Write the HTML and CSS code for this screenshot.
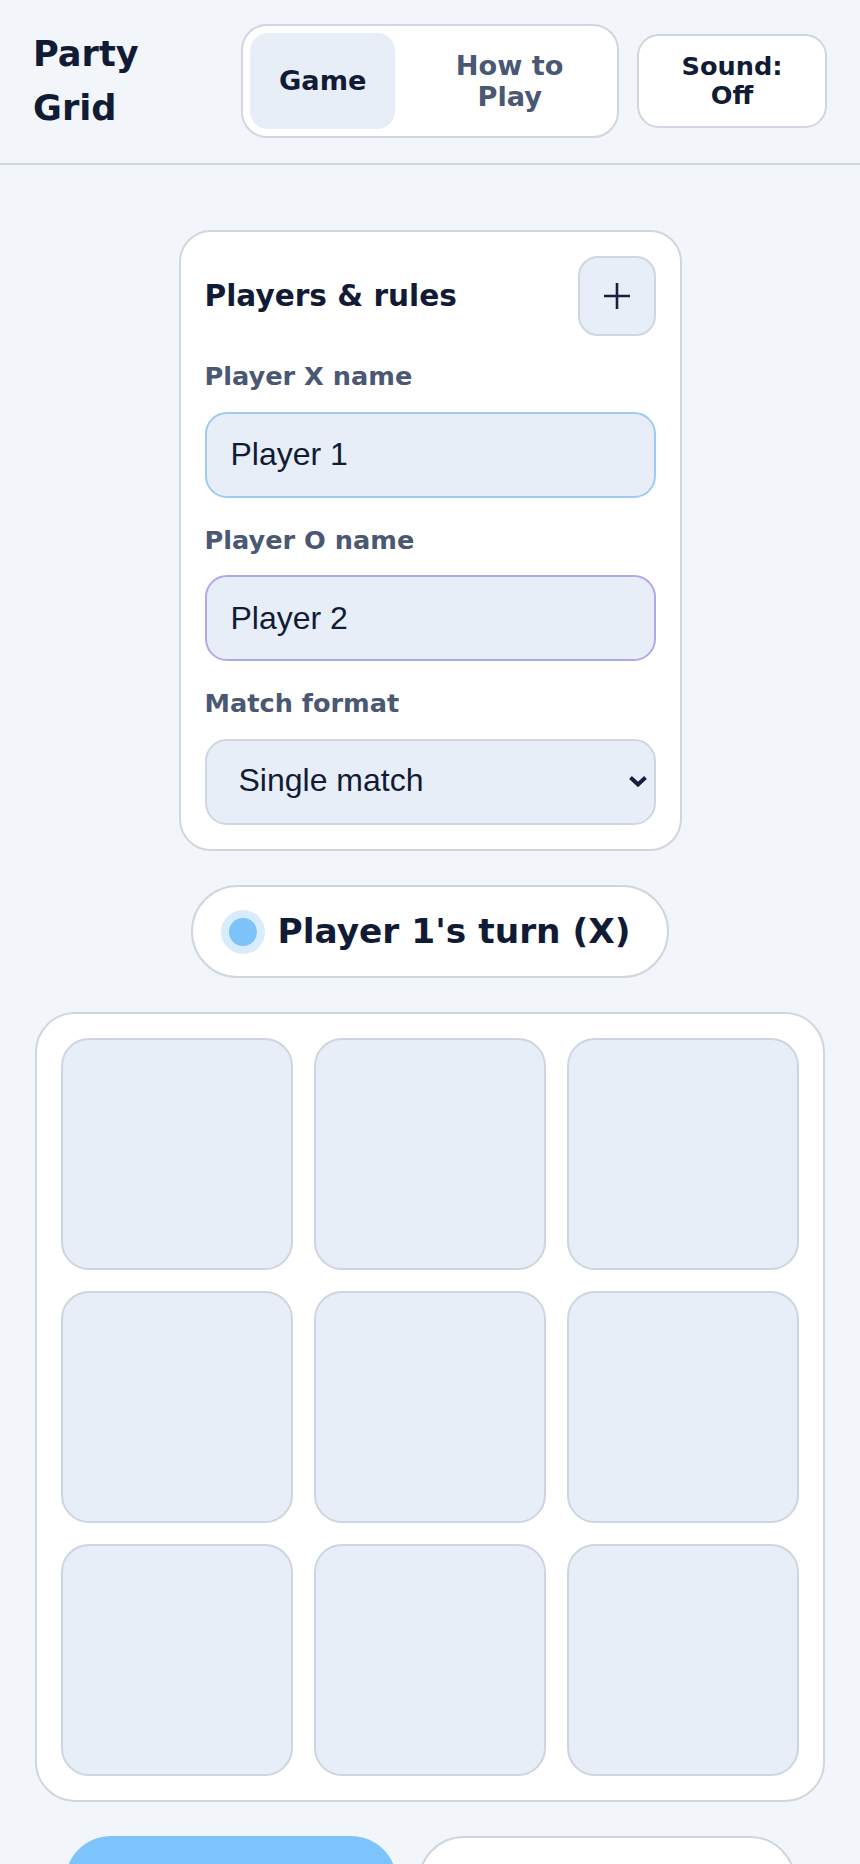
FILE: index.html
```html
<!doctype html>
<html lang="en">
    <head>
        <meta charset="UTF-8" />
        <meta name="viewport" content="width=device-width, initial-scale=1.0" />
        <title>Party Grid</title>
        <link rel="stylesheet" href="styles.css">
    </head>
    <body>
        <header class="topbar">
            <h1 class="brand">Party Grid</h1>
            <nav class="tabs">
                <button class="tab tab-active">Game</button>
                <button class="tab tab-wide">How to Play</button>
            </nav>
            <button class="sound-btn">Sound: Off</button>
        </header>

        <main class="page">
            <section class="card">
                <div class="card-head">
                    <h2>Players &amp; rules</h2>
                    <button class="icon-btn" aria-label="Add">
                        <svg width="28" height="28" viewBox="0 0 28 28">
                            <path d="M14 1V27M1 14H27" stroke="#16203a" stroke-width="2.6" fill="none" />
                        </svg>
                    </button>
                </div>

                <div class="field">
                    <label for="player-x">Player X name</label>
                    <input type="text" id="player-x" class="text-input input-x" value="Player 1" />
                </div>

                <div class="field">
                    <label for="player-o">Player O name</label>
                    <input type="text" id="player-o" class="text-input input-o" value="Player 2" />
                </div>

                <div class="field">
                    <label for="format">Match format</label>
                    <div class="select-wrap">
                        <select id="format" class="text-input select">
                            <option>Single match</option>
                            <option>Best of 3</option>
                            <option>Best of 5</option>
                        </select>
                        <svg class="chevron" width="20" height="12" viewBox="0 0 20 12">
                            <path d="M2.5 2.5L10 9.5L17.5 2.5" stroke="#16203a" stroke-width="4" fill="none" />
                        </svg>
                    </div>
                </div>
            </section>

            <div class="turn">
                <span class="turn-dot"></span>
                <span class="turn-text">Player 1's turn (X)</span>
            </div>

            <div class="board">
                <button class="cell"></button>
                <button class="cell"></button>
                <button class="cell"></button>
                <button class="cell"></button>
                <button class="cell"></button>
                <button class="cell"></button>
                <button class="cell"></button>
                <button class="cell"></button>
                <button class="cell"></button>
            </div>

            <div class="actions">
                <button class="btn btn-primary">New round</button>
                <button class="btn btn-secondary">Reset scores</button>
            </div>
        </main>
    </body>
</html>
```

FILE: styles.css
```css
body {
    font-family: "DejaVu Sans", Verdana, sans-serif;
    background-color: #f2f6fb;
    color: #111b35;
    margin: 0;
    padding: 0;
}
button {
    font-family: inherit;
    cursor: pointer;
}
.topbar {
    display: flex;
    align-items: center;
    gap: 18px;
    padding: 24px 33px 25px;
    border-bottom: 2px solid #cfd6e1;
}
.brand {
    flex: 1;
    min-width: 0;
    margin: 0;
    font-size: 35.2px;
    line-height: 54px;
    font-weight: 700;
    color: #111b35;
}
.tabs {
    display: flex;
    gap: 14px;
    width: 378px;
    box-sizing: border-box;
    padding: 7px;
    background: #fff;
    border: 2px solid #cfd6e1;
    border-radius: 26px;
}
.tab {
    height: 96px;
    padding: 0 29px;
    border: none;
    border-radius: 18px;
    background: transparent;
    font-size: 27.2px;
    line-height: 1.15;
    font-weight: 700;
    color: #4a5873;
}
.tab-active {
    background: #e8eef7;
    color: #111b35;
}
.tab-wide {
    flex: 1;
    padding: 0 16px;
}
.sound-btn {
    width: 190px;
    height: 94px;
    padding: 0 30px;
    background: #fff;
    border: 2px solid #cfd6e1;
    border-radius: 22px;
    font-size: 25.6px;
    line-height: 1.15;
    font-weight: 700;
    color: #111b35;
}
.page {
    display: flex;
    flex-direction: column;
    align-items: center;
    gap: 34px;
    padding: 65px 0 40px;
}
.card {
    width: 503px;
    box-sizing: border-box;
    padding: 24px;
    background: #fff;
    border: 2px solid #cfd6e1;
    border-radius: 32px;
}
.card-head {
    display: flex;
    align-items: center;
    justify-content: space-between;
    margin-bottom: 25px;
}
.card-head h2 {
    margin: 0;
    font-size: 29.6px;
    font-weight: 700;
    color: #111b35;
}
.icon-btn {
    display: flex;
    align-items: center;
    justify-content: center;
    width: 78px;
    height: 80px;
    padding: 0;
    background: #e8eef7;
    border: 2px solid #cfd6e1;
    border-radius: 20px;
}
.field {
    margin-bottom: 27px;
}
.field:last-child {
    margin-bottom: 0;
}
.field label {
    display: block;
    margin-bottom: 20px;
    font-size: 25.6px;
    line-height: 1.2;
    font-weight: 700;
    color: #4a5873;
}
.text-input {
    display: block;
    width: 100%;
    height: 86px;
    box-sizing: border-box;
    padding: 0 24px;
    background: #e8eef7;
    border: 2px solid #cfd6e1;
    border-radius: 22px;
    font-family: "Liberation Sans", Arial, sans-serif;
    font-size: 32px;
    color: #111b35;
    outline: none;
}
.input-x {
    border-color: #9fcbf0;
}
.input-o {
    border-color: #b2a7ea;
}
.select-wrap {
    position: relative;
}
.select {
    appearance: none;
    -webkit-appearance: none;
    padding: 0 24px 4px 32px;
}
.chevron {
    position: absolute;
    right: 8px;
    top: 36px;
    pointer-events: none;
}
.turn {
    display: flex;
    align-items: center;
    gap: 20px;
    padding: 24px 36px;
    background: #fff;
    border: 2px solid #cfd6e1;
    border-radius: 999px;
}
.turn-dot {
    width: 28px;
    height: 28px;
    border-radius: 50%;
    background: #7cc3fa;
    box-shadow: 0 0 0 8px #d8ecfd;
}
.turn-text {
    font-size: 34.4px;
    line-height: 1.2;
    font-weight: 700;
    color: #111b35;
}
.board {
    display: grid;
    grid-template-columns: repeat(3, 1fr);
    gap: 21px;
    width: 790px;
    box-sizing: border-box;
    padding: 24px;
    background: #fff;
    border: 2px solid #cfd6e1;
    border-radius: 40px;
}
.cell {
    aspect-ratio: 1;
    padding: 0;
    background: #e8eef7;
    border: 2px solid #cdd5e0;
    border-radius: 28px;
}
.actions {
    display: flex;
    justify-content: center;
    gap: 21px;
}
.btn {
    height: 92px;
    border-radius: 46px;
    font-size: 27.2px;
    font-weight: 700;
}
.btn-primary {
    width: 332px;
    background: #7cc4fb;
    border: none;
    color: #0d2140;
}
.btn-secondary {
    width: 378px;
    background: #fff;
    border: 2px solid #cfd6e1;
    color: #111b35;
}
```
